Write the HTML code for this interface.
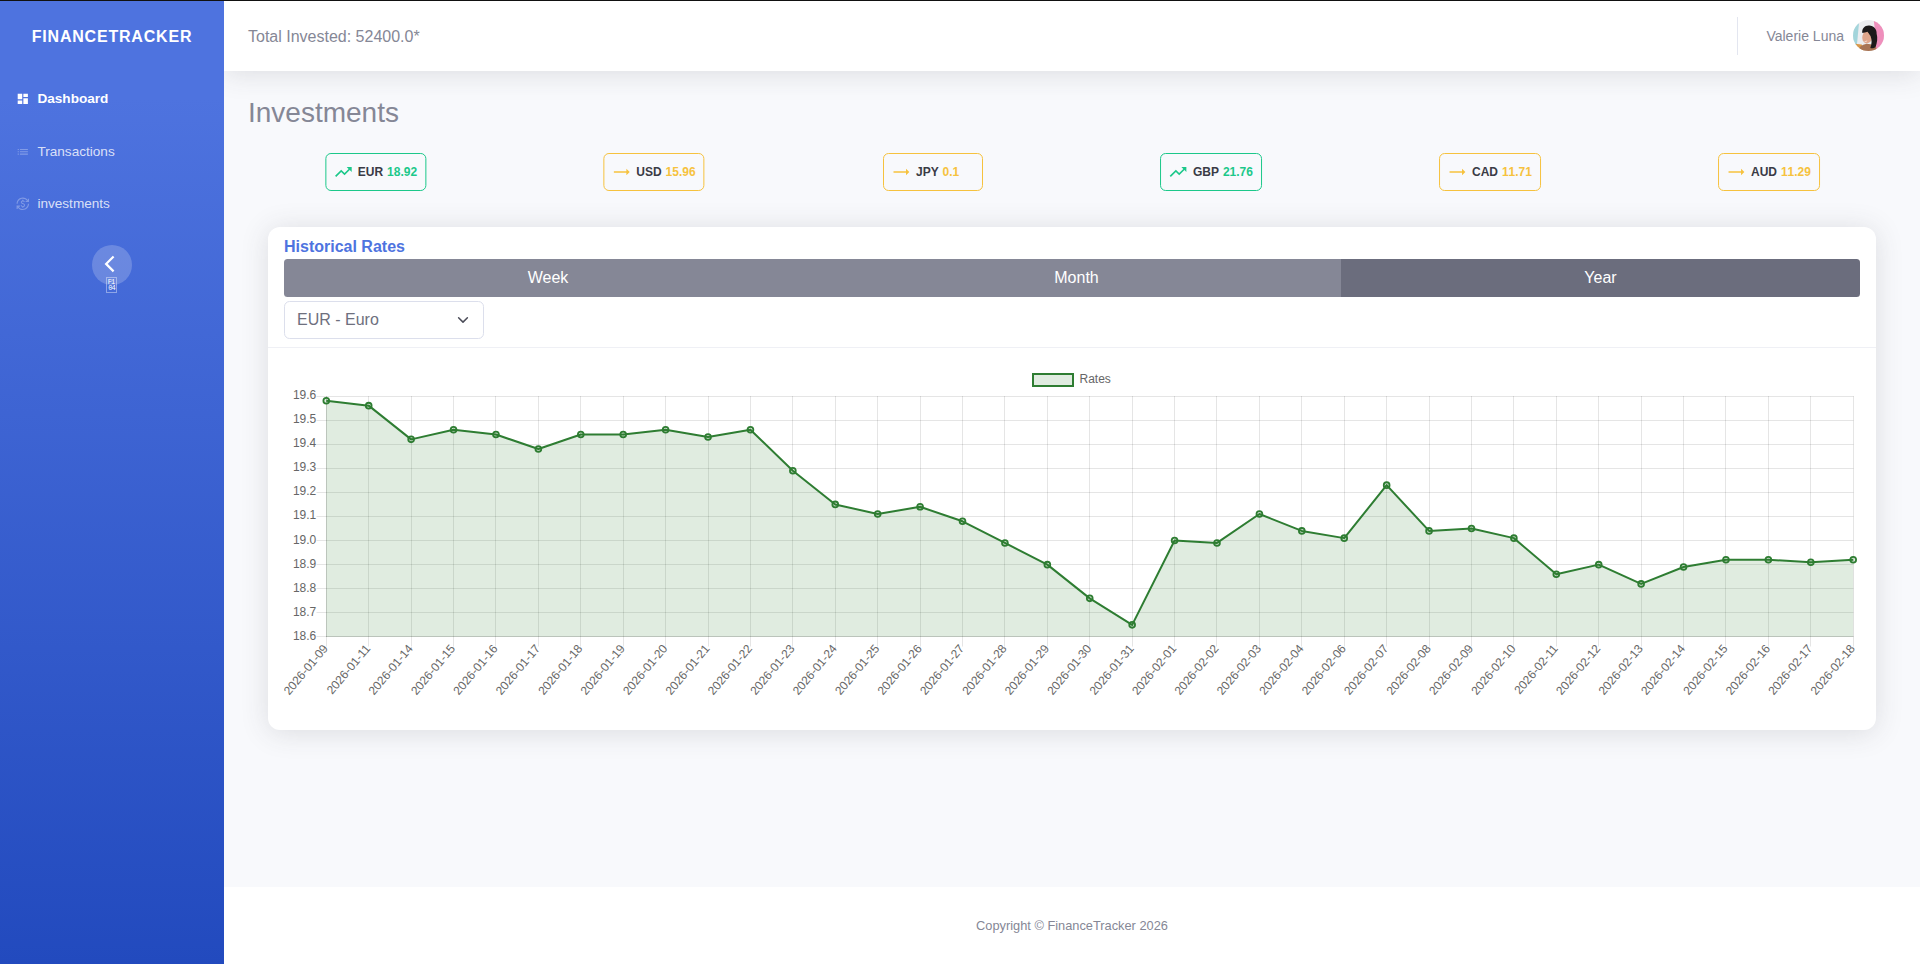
<!DOCTYPE html>
<html lang="en">
<head>
<meta charset="utf-8">
<title>FinanceTracker - Investments</title>
<style>
*{box-sizing:border-box}
html,body{margin:0;padding:0}
body{width:1920px;height:964px;overflow:hidden;position:relative;background:#f8f9fc;font-family:"Liberation Sans",Arial,sans-serif;font-size:16px;line-height:1.5;color:#858796}
.topline{position:absolute;left:0;top:0;width:1920px;height:1px;background:#111;z-index:10}
.sidebar{z-index:5;position:absolute;left:0;top:1px;width:224px;height:963px;background-color:#4e73df;background-image:linear-gradient(180deg,#4e73df 10%,#224abe 100%)}
.brand{position:absolute;left:0;top:1px;width:224px;height:70px;line-height:70px;text-align:center;color:#fff;font-size:16px;font-weight:700;letter-spacing:0.8px;text-transform:uppercase}
.nav{position:absolute;left:0;width:224px;height:52px;padding:16px;font-size:13.6px;line-height:20.4px;color:rgba(255,255,255,.8);white-space:nowrap}
.nav.active{color:#fff;font-weight:700}
.nav svg{position:absolute;left:16px;top:19.400px;width:13.6px;height:13.6px;fill:rgba(255,255,255,.3)}
.nav.active svg{fill:#fff}
.nav span{position:absolute;left:37.4px;top:16px}
.toggler{position:absolute;left:92px;top:244px;width:40px;height:40px;border-radius:50%;background:rgba(255,255,255,.2)}
.toggler svg{position:absolute;left:0;top:0}
.tofu{position:absolute;left:106px;top:276px;width:11px;height:16px;border:1px solid rgba(255,255,255,.4);color:#fff;font-family:"Liberation Mono",monospace;font-size:7px;font-weight:400;line-height:5.800px;text-align:center;padding-top:2.400px;letter-spacing:-0.900px;text-indent:-0.900px}
.topbar{position:absolute;left:224px;top:1px;width:1696px;height:70px;background:#fff;box-shadow:0 .15rem 1.75rem 0 rgba(58,59,69,.15)}
.topbar .total{position:absolute;left:24px;top:1px;line-height:70px;font-size:16px;color:#858796}
.topbar .divider{position:absolute;left:1513px;top:16px;width:1px;height:38px;background:#e3e6f0}
.topbar .user{position:absolute;right:76px;top:0;line-height:70px;font-size:14px;color:#858796}
.topbar .avatar{position:absolute;left:1628.500px;top:19px;width:31px;height:31px;border-radius:50%;overflow:hidden}
h1{position:absolute;left:248px;top:96px;margin:0;font-size:28px;font-weight:400;line-height:1.2;color:#858796}
.badge{position:absolute;top:153px;height:38px;min-width:100px;border:1px solid #1cc88a;border-radius:5.6px;padding:0 8px;display:flex;align-items:center;font-size:12px;font-weight:700;color:#3a3b45;white-space:nowrap;transform:translateX(-50%)}
.badge svg{width:20px;height:20px;margin-left:-0.8px;margin-right:4.8px;fill:#1cc88a;flex:none}
.badge b{font-weight:700;color:#1cc88a;margin-left:3.9px;font-kerning:none}
.badge.flat{border-color:#f6c23e}
.badge.flat svg{fill:#f6c23e}
.badge.flat b{color:#f6c23e}
.card{position:absolute;left:268px;top:227px;width:1608px;height:503px;background:#fff;border-radius:12px;box-shadow:0 .15rem 1.75rem 0 rgba(58,59,69,.15)}
.card h6{position:absolute;left:16px;top:10px;margin:0;font-size:16px;line-height:19.2px;font-weight:700;color:#4e73df}
.btns{position:absolute;left:16px;top:32px;width:1576px;height:38px;display:flex;border-radius:3.5px;overflow:hidden}
.btns div{flex:1 1 auto;text-align:center;line-height:38px;font-size:16px;color:#fff;background:#858796;padding:0 12px}
.btns div.on{background:#6b6d7d}
.select{position:absolute;left:16px;top:74px;width:200px;height:38px;border:1px solid #dcdfec;border-radius:5.6px;background:#fff;color:#6e707e;font-size:16px;line-height:36px;padding-left:12px}
.select svg{position:absolute;right:12px;top:10px}
.hdrline{position:absolute;left:0;top:120px;width:1608px;height:1px;background:#eff0f5}
.chart{position:absolute;left:16px;top:137px}
.footer{position:absolute;left:224px;top:887px;width:1696px;height:77px;background:#fff;text-align:center;font-size:12.8px;line-height:77px;color:#858796}
</style>
</head>
<body>
<div class="topline"></div>

<div class="sidebar">
  <div class="brand">FinanceTracker</div>
  <div class="nav active" style="top:72px">
    <svg viewBox="0 0 24 24"><path d="M3 13h8V3H3v10zm0 8h8v-6H3v6zm10 0h8V11h-8v10zm0-18v6h8V3h-8z"/></svg>
    <span>Dashboard</span>
  </div>
  <div class="nav" style="top:125px">
    <svg viewBox="0 0 24 24"><path d="M3 13h2v-2H3v2zm0 4h2v-2H3v2zm0-8h2V7H3v2zm4 4h14v-2H7v2zm0 4h14v-2H7v2zM7 7v2h14V7H7z"/></svg>
    <span>Transactions</span>
  </div>
  <div class="nav" style="top:177px">
    <svg viewBox="0 0 24 24"><path d="M12.89 11.1c-1.78-.59-2.64-.96-2.64-1.9 0-1.02 1.11-1.39 1.81-1.39 1.31 0 1.79.99 1.9 1.34l1.58-.67c-.15-.45-.82-1.92-2.54-2.24V5h-2v1.26c-2.48.56-2.49 2.86-2.49 2.96 0 2.27 2.25 2.91 3.35 3.31 1.58.56 2.28 1.07 2.28 2.03 0 1.13-1.05 1.61-1.98 1.61-1.82 0-2.34-1.87-2.4-2.09l-1.66.67c.63 2.19 2.28 2.78 2.9 2.96V19h2v-1.24c.4-.09 2.9-.59 2.9-3.22 0-1.39-.61-2.61-3.01-3.44zM3 21H1v-6h6v2H4.520c1.61 2.41 4.360 4 7.480 4 4.970 0 9-4.030 9-9h2c0 6.080-4.920 11-11 11-3.720 0-7.010-1.850-9-4.670V21zM1 12C1 5.920 5.920 1 12 1c3.720 0 7.010 1.850 9 4.670V3h2v6h-6V7h2.480C17.870 4.590 15.120 3 12 3 7.030 3 3 7.030 3 12H1z"/></svg>
    <span>investments</span>
  </div>
  <div class="toggler"><svg width="40" height="40" viewBox="0 0 40 40"><path d="M21.600 11.500L14.100 18.900l7.500 7.500" fill="none" stroke="#fff" stroke-width="2.200"/></svg></div>
  <div class="tofu">F1<br>04</div>
</div>

<div class="topbar">
  <div class="total">Total Invested: 52400.0*</div>
  <div class="divider"></div>
  <div class="user">Valerie Luna</div>
  <div class="avatar">
    <svg width="31" height="31" viewBox="0 0 32 32">
      <rect width="32" height="32" fill="#ecedf0"/>
      <path d="M0 0h6.500l-2.500 26H0z" fill="#a3d5db"/>
      <path d="M21.400 0H32v32H22.500l1.500-9z" fill="#ef8fbc"/>
      <path d="M2 24.500l7 .8 3 6.700H2z" fill="#d9984a"/>
      <path d="M5 32c1-4 4-6.500 9-7.500l8 1c2 2 2.500 4 2.500 6.500z" fill="#a87455"/>
      <ellipse cx="14.800" cy="17.500" rx="5.200" ry="6.800" fill="#dfa68c" transform="rotate(14 14.800 17.500)"/>
      <path d="M9.600 13.500c-.6-4.500 2.400-8 7-7.800 5 .2 8 3.800 7.800 8.500 1.200 4.500.6 9-1 13.500-1.500 1.600-3.500 1.800-5.500 1.300 1.600-4.200 1.800-8.500.2-12.500-1.400-2.200-2.200-3.200-3.100-4.500-1.800.6-3.600 1-5.400 1.500z" fill="#1c191a"/>
      <path d="M10.800 21.500q2 1.300 4-.6-1.300 2.800-4 .6z" fill="#fff"/>
    </svg>
  </div>
</div>

<h1>Investments</h1>

<div class="badge" style="left:375.500px"><svg viewBox="0 0 24 24"><path d="M16 6l2.290 2.290-4.880 4.880-4-4L2 16.590 3.410 18l6-6 4 4 6.300-6.290L22 12V6z"/></svg>EUR<b>18.92</b></div>
<div class="badge flat" style="left:654px"><svg viewBox="0 0 24 24"><path d="M22 12l-4-4v3H3v2h15v3z"/></svg>USD<b>15.96</b></div>
<div class="badge flat" style="left:933px"><svg viewBox="0 0 24 24"><path d="M22 12l-4-4v3H3v2h15v3z"/></svg>JPY<b>0.1</b></div>
<div class="badge" style="left:1211px"><svg viewBox="0 0 24 24"><path d="M16 6l2.290 2.290-4.880 4.880-4-4L2 16.590 3.410 18l6-6 4 4 6.300-6.290L22 12V6z"/></svg>GBP<b>21.76</b></div>
<div class="badge flat" style="left:1490px"><svg viewBox="0 0 24 24"><path d="M22 12l-4-4v3H3v2h15v3z"/></svg>CAD<b>11.71</b></div>
<div class="badge flat" style="left:1769px"><svg viewBox="0 0 24 24"><path d="M22 12l-4-4v3H3v2h15v3z"/></svg>AUD<b>11.29</b></div>

<div class="card">
  <h6>Historical Rates</h6>
  <div class="btns"><div style="flex:none;width:528px">Week</div><div style="flex:none;width:529px">Month</div><div class="on" style="flex:none;width:519px">Year</div></div>
  <div class="select">EUR - Euro<svg width="16" height="16" viewBox="0 0 16 16"><path d="M3.600 5.700l4.400 4.400 4.400-4.400" fill="none" stroke="#4b4c58" stroke-width="1.500" stroke-linecap="round" stroke-linejoin="round"/></svg></div>
  <div class="hdrline"></div>
  <svg class="chart" width="1576" height="350" viewBox="0 0 1576 350" font-family="Liberation Sans, Arial, sans-serif" font-size="12" fill="#666">
<path d="M42.5 32.0V282.5M84.5 32.0V282.5M127.5 32.0V282.5M169.5 32.0V282.5M211.5 32.0V282.5M254.5 32.0V282.5M296.5 32.0V282.5M339.5 32.0V282.5M381.5 32.0V282.5M424.5 32.0V282.5M466.5 32.0V282.5M508.5 32.0V282.5M551.5 32.0V282.5M593.5 32.0V282.5M636.5 32.0V282.5M678.5 32.0V282.5M720.5 32.0V282.5M763.5 32.0V282.5M805.5 32.0V282.5M848.5 32.0V282.5M890.5 32.0V282.5M932.5 32.0V282.5M975.5 32.0V282.5M1017.5 32.0V282.5M1060.5 32.0V282.5M1102.5 32.0V282.5M1145.5 32.0V282.5M1187.5 32.0V282.5M1229.5 32.0V282.5M1272.5 32.0V282.5M1314.5 32.0V282.5M1357.5 32.0V282.5M1399.5 32.0V282.5M1441.5 32.0V282.5M1484.5 32.0V282.5M1526.5 32.0V282.5M1569.5 32.0V282.5M32.5 32.5H1569.5M32.5 56.5H1569.5M32.5 80.5H1569.5M32.5 104.5H1569.5M32.5 128.5H1569.5M32.5 152.5H1569.5M32.5 176.5H1569.5M32.5 200.5H1569.5M32.5 224.5H1569.5M32.5 248.5H1569.5M32.5 272.5H1569.5" stroke="rgba(0,0,0,0.1)" stroke-width="1" fill="none"/>
<path d="M42.5 32.0V273.0M42.0 272.5H1569.5" stroke="rgba(0,0,0,0.1)" stroke-width="1" fill="none"/>
<polygon points="42.30,272.70 42.30,36.82 84.71,41.64 127.13,75.36 169.54,65.73 211.96,70.54 254.37,85.00 296.78,70.54 339.20,70.54 381.61,65.73 424.03,72.95 466.44,65.73 508.85,106.68 551.27,140.41 593.68,150.04 636.09,142.81 678.51,157.27 720.92,178.95 763.34,200.63 805.75,234.36 848.16,260.86 890.58,176.54 932.99,178.95 975.41,150.04 1017.82,166.90 1060.23,174.13 1102.65,121.13 1145.06,166.90 1187.48,164.50 1229.89,174.13 1272.30,210.27 1314.72,200.63 1357.13,219.90 1399.54,203.04 1441.96,195.81 1484.37,195.81 1526.79,198.22 1569.20,195.81 1569.20,272.70" fill="rgba(46,125,50,0.15)"/>
<polyline points="42.30,36.82 84.71,41.64 127.13,75.36 169.54,65.73 211.96,70.54 254.37,85.00 296.78,70.54 339.20,70.54 381.61,65.73 424.03,72.95 466.44,65.73 508.85,106.68 551.27,140.41 593.68,150.04 636.09,142.81 678.51,157.27 720.92,178.95 763.34,200.63 805.75,234.36 848.16,260.86 890.58,176.54 932.99,178.95 975.41,150.04 1017.82,166.90 1060.23,174.13 1102.65,121.13 1145.06,166.90 1187.48,164.50 1229.89,174.13 1272.30,210.27 1314.72,200.63 1357.13,219.90 1399.54,203.04 1441.96,195.81 1484.37,195.81 1526.79,198.22 1569.20,195.81" fill="none" stroke="#2e7d32" stroke-width="2" stroke-linejoin="round"/>
<circle cx="42.30" cy="36.82" r="2.9" fill="rgba(46,125,50,0.15)" stroke="#2e7d32" stroke-width="1.8"/>
<circle cx="84.71" cy="41.64" r="2.9" fill="rgba(46,125,50,0.15)" stroke="#2e7d32" stroke-width="1.8"/>
<circle cx="127.13" cy="75.36" r="2.9" fill="rgba(46,125,50,0.15)" stroke="#2e7d32" stroke-width="1.8"/>
<circle cx="169.54" cy="65.73" r="2.9" fill="rgba(46,125,50,0.15)" stroke="#2e7d32" stroke-width="1.8"/>
<circle cx="211.96" cy="70.54" r="2.9" fill="rgba(46,125,50,0.15)" stroke="#2e7d32" stroke-width="1.8"/>
<circle cx="254.37" cy="85.00" r="2.9" fill="rgba(46,125,50,0.15)" stroke="#2e7d32" stroke-width="1.8"/>
<circle cx="296.78" cy="70.54" r="2.9" fill="rgba(46,125,50,0.15)" stroke="#2e7d32" stroke-width="1.8"/>
<circle cx="339.20" cy="70.54" r="2.9" fill="rgba(46,125,50,0.15)" stroke="#2e7d32" stroke-width="1.8"/>
<circle cx="381.61" cy="65.73" r="2.9" fill="rgba(46,125,50,0.15)" stroke="#2e7d32" stroke-width="1.8"/>
<circle cx="424.03" cy="72.95" r="2.9" fill="rgba(46,125,50,0.15)" stroke="#2e7d32" stroke-width="1.8"/>
<circle cx="466.44" cy="65.73" r="2.9" fill="rgba(46,125,50,0.15)" stroke="#2e7d32" stroke-width="1.8"/>
<circle cx="508.85" cy="106.68" r="2.9" fill="rgba(46,125,50,0.15)" stroke="#2e7d32" stroke-width="1.8"/>
<circle cx="551.27" cy="140.41" r="2.9" fill="rgba(46,125,50,0.15)" stroke="#2e7d32" stroke-width="1.8"/>
<circle cx="593.68" cy="150.04" r="2.9" fill="rgba(46,125,50,0.15)" stroke="#2e7d32" stroke-width="1.8"/>
<circle cx="636.09" cy="142.81" r="2.9" fill="rgba(46,125,50,0.15)" stroke="#2e7d32" stroke-width="1.8"/>
<circle cx="678.51" cy="157.27" r="2.9" fill="rgba(46,125,50,0.15)" stroke="#2e7d32" stroke-width="1.8"/>
<circle cx="720.92" cy="178.95" r="2.9" fill="rgba(46,125,50,0.15)" stroke="#2e7d32" stroke-width="1.8"/>
<circle cx="763.34" cy="200.63" r="2.9" fill="rgba(46,125,50,0.15)" stroke="#2e7d32" stroke-width="1.8"/>
<circle cx="805.75" cy="234.36" r="2.9" fill="rgba(46,125,50,0.15)" stroke="#2e7d32" stroke-width="1.8"/>
<circle cx="848.16" cy="260.86" r="2.9" fill="rgba(46,125,50,0.15)" stroke="#2e7d32" stroke-width="1.8"/>
<circle cx="890.58" cy="176.54" r="2.9" fill="rgba(46,125,50,0.15)" stroke="#2e7d32" stroke-width="1.8"/>
<circle cx="932.99" cy="178.95" r="2.9" fill="rgba(46,125,50,0.15)" stroke="#2e7d32" stroke-width="1.8"/>
<circle cx="975.41" cy="150.04" r="2.9" fill="rgba(46,125,50,0.15)" stroke="#2e7d32" stroke-width="1.8"/>
<circle cx="1017.82" cy="166.90" r="2.9" fill="rgba(46,125,50,0.15)" stroke="#2e7d32" stroke-width="1.8"/>
<circle cx="1060.23" cy="174.13" r="2.9" fill="rgba(46,125,50,0.15)" stroke="#2e7d32" stroke-width="1.8"/>
<circle cx="1102.65" cy="121.13" r="2.9" fill="rgba(46,125,50,0.15)" stroke="#2e7d32" stroke-width="1.8"/>
<circle cx="1145.06" cy="166.90" r="2.9" fill="rgba(46,125,50,0.15)" stroke="#2e7d32" stroke-width="1.8"/>
<circle cx="1187.48" cy="164.50" r="2.9" fill="rgba(46,125,50,0.15)" stroke="#2e7d32" stroke-width="1.8"/>
<circle cx="1229.89" cy="174.13" r="2.9" fill="rgba(46,125,50,0.15)" stroke="#2e7d32" stroke-width="1.8"/>
<circle cx="1272.30" cy="210.27" r="2.9" fill="rgba(46,125,50,0.15)" stroke="#2e7d32" stroke-width="1.8"/>
<circle cx="1314.72" cy="200.63" r="2.9" fill="rgba(46,125,50,0.15)" stroke="#2e7d32" stroke-width="1.8"/>
<circle cx="1357.13" cy="219.90" r="2.9" fill="rgba(46,125,50,0.15)" stroke="#2e7d32" stroke-width="1.8"/>
<circle cx="1399.54" cy="203.04" r="2.9" fill="rgba(46,125,50,0.15)" stroke="#2e7d32" stroke-width="1.8"/>
<circle cx="1441.96" cy="195.81" r="2.9" fill="rgba(46,125,50,0.15)" stroke="#2e7d32" stroke-width="1.8"/>
<circle cx="1484.37" cy="195.81" r="2.9" fill="rgba(46,125,50,0.15)" stroke="#2e7d32" stroke-width="1.8"/>
<circle cx="1526.79" cy="198.22" r="2.9" fill="rgba(46,125,50,0.15)" stroke="#2e7d32" stroke-width="1.8"/>
<circle cx="1569.20" cy="195.81" r="2.9" fill="rgba(46,125,50,0.15)" stroke="#2e7d32" stroke-width="1.8"/>
<text x="32.3" y="35" text-anchor="end">19.6</text>
<text x="32.3" y="59" text-anchor="end">19.5</text>
<text x="32.3" y="83" text-anchor="end">19.4</text>
<text x="32.3" y="107" text-anchor="end">19.3</text>
<text x="32.3" y="131" text-anchor="end">19.2</text>
<text x="32.3" y="155" text-anchor="end">19.1</text>
<text x="32.3" y="180" text-anchor="end">19.0</text>
<text x="32.3" y="204" text-anchor="end">18.9</text>
<text x="32.3" y="228" text-anchor="end">18.8</text>
<text x="32.3" y="252" text-anchor="end">18.7</text>
<text x="32.3" y="276" text-anchor="end">18.6</text>
<text transform="translate(41.60,282.20) rotate(-50)" text-anchor="end" dy="4">2026-01-09</text>
<text transform="translate(84.01,282.20) rotate(-50)" text-anchor="end" dy="4">2026-01-11</text>
<text transform="translate(126.43,282.20) rotate(-50)" text-anchor="end" dy="4">2026-01-14</text>
<text transform="translate(168.84,282.20) rotate(-50)" text-anchor="end" dy="4">2026-01-15</text>
<text transform="translate(211.26,282.20) rotate(-50)" text-anchor="end" dy="4">2026-01-16</text>
<text transform="translate(253.67,282.20) rotate(-50)" text-anchor="end" dy="4">2026-01-17</text>
<text transform="translate(296.08,282.20) rotate(-50)" text-anchor="end" dy="4">2026-01-18</text>
<text transform="translate(338.50,282.20) rotate(-50)" text-anchor="end" dy="4">2026-01-19</text>
<text transform="translate(380.91,282.20) rotate(-50)" text-anchor="end" dy="4">2026-01-20</text>
<text transform="translate(423.33,282.20) rotate(-50)" text-anchor="end" dy="4">2026-01-21</text>
<text transform="translate(465.74,282.20) rotate(-50)" text-anchor="end" dy="4">2026-01-22</text>
<text transform="translate(508.15,282.20) rotate(-50)" text-anchor="end" dy="4">2026-01-23</text>
<text transform="translate(550.57,282.20) rotate(-50)" text-anchor="end" dy="4">2026-01-24</text>
<text transform="translate(592.98,282.20) rotate(-50)" text-anchor="end" dy="4">2026-01-25</text>
<text transform="translate(635.39,282.20) rotate(-50)" text-anchor="end" dy="4">2026-01-26</text>
<text transform="translate(677.81,282.20) rotate(-50)" text-anchor="end" dy="4">2026-01-27</text>
<text transform="translate(720.22,282.20) rotate(-50)" text-anchor="end" dy="4">2026-01-28</text>
<text transform="translate(762.64,282.20) rotate(-50)" text-anchor="end" dy="4">2026-01-29</text>
<text transform="translate(805.05,282.20) rotate(-50)" text-anchor="end" dy="4">2026-01-30</text>
<text transform="translate(847.46,282.20) rotate(-50)" text-anchor="end" dy="4">2026-01-31</text>
<text transform="translate(889.88,282.20) rotate(-50)" text-anchor="end" dy="4">2026-02-01</text>
<text transform="translate(932.29,282.20) rotate(-50)" text-anchor="end" dy="4">2026-02-02</text>
<text transform="translate(974.71,282.20) rotate(-50)" text-anchor="end" dy="4">2026-02-03</text>
<text transform="translate(1017.12,282.20) rotate(-50)" text-anchor="end" dy="4">2026-02-04</text>
<text transform="translate(1059.53,282.20) rotate(-50)" text-anchor="end" dy="4">2026-02-06</text>
<text transform="translate(1101.95,282.20) rotate(-50)" text-anchor="end" dy="4">2026-02-07</text>
<text transform="translate(1144.36,282.20) rotate(-50)" text-anchor="end" dy="4">2026-02-08</text>
<text transform="translate(1186.78,282.20) rotate(-50)" text-anchor="end" dy="4">2026-02-09</text>
<text transform="translate(1229.19,282.20) rotate(-50)" text-anchor="end" dy="4">2026-02-10</text>
<text transform="translate(1271.60,282.20) rotate(-50)" text-anchor="end" dy="4">2026-02-11</text>
<text transform="translate(1314.02,282.20) rotate(-50)" text-anchor="end" dy="4">2026-02-12</text>
<text transform="translate(1356.43,282.20) rotate(-50)" text-anchor="end" dy="4">2026-02-13</text>
<text transform="translate(1398.84,282.20) rotate(-50)" text-anchor="end" dy="4">2026-02-14</text>
<text transform="translate(1441.26,282.20) rotate(-50)" text-anchor="end" dy="4">2026-02-15</text>
<text transform="translate(1483.67,282.20) rotate(-50)" text-anchor="end" dy="4">2026-02-16</text>
<text transform="translate(1526.09,282.20) rotate(-50)" text-anchor="end" dy="4">2026-02-17</text>
<text transform="translate(1568.50,282.20) rotate(-50)" text-anchor="end" dy="4">2026-02-18</text>
<rect x="749" y="10" width="40" height="12" fill="rgba(46,125,50,0.15)" stroke="#2e7d32" stroke-width="2"/>
<text x="795.5" y="18.69999999999999">Rates</text>
</svg>
</div>

<div class="footer">Copyright © FinanceTracker 2026</div>
</body>
</html>
